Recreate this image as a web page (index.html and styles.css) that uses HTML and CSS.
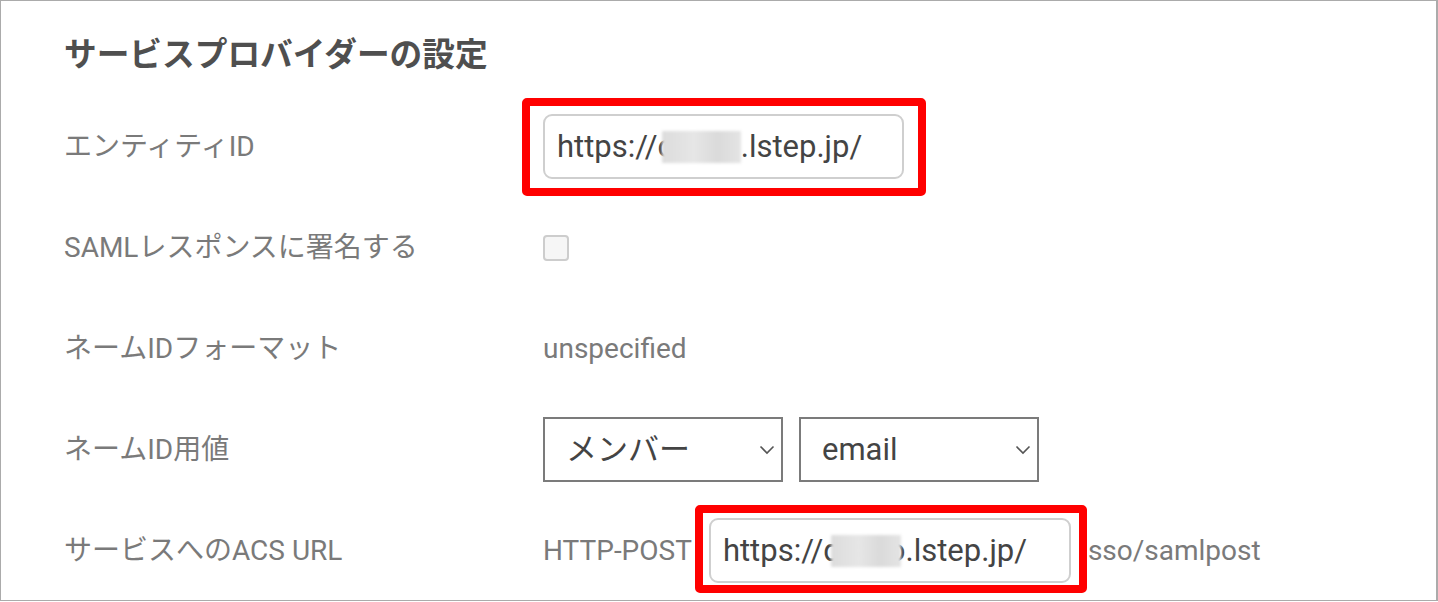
FILE: index.html
```html
<!DOCTYPE html>
<html lang="ja">
<head>
  <meta charset="UTF-8">
  <title>サービスプロバイダーの設定</title>
  <link rel="stylesheet" href="styles.css">
</head>
<body>
  <div class="panel">
    <h2>サービスプロバイダーの設定</h2>

    <div class="row">
      <div class="label">エンティティID</div>
      <div class="value">
        <span class="mark mark-entity">
          <span class="url-field">https://c<span class="masked m1"></span>.lstep.jp/</span>
        </span>
      </div>
    </div>

    <div class="row">
      <div class="label">SAMLレスポンスに署名する</div>
      <div class="value">
        <input type="checkbox" class="check">
      </div>
    </div>

    <div class="row">
      <div class="label">ネームIDフォーマット</div>
      <div class="value text">unspecified</div>
    </div>

    <div class="row">
      <div class="label">ネームID用値</div>
      <div class="value selects">
        <div class="select-wrap">
          <select><option>メンバー</option></select>
          <svg class="chev" width="16" height="10" viewBox="0 0 16 10"><path d="M1.5 1.5 L8 8 L14.5 1.5" fill="none" stroke="#555" stroke-width="1.6"/></svg>
        </div>
        <div class="select-wrap">
          <select><option>email</option></select>
          <svg class="chev" width="16" height="10" viewBox="0 0 16 10"><path d="M1.5 1.5 L8 8 L14.5 1.5" fill="none" stroke="#555" stroke-width="1.6"/></svg>
        </div>
      </div>
    </div>

    <div class="row">
      <div class="label">サービスへのACS URL</div>
      <div class="value text acs">
        <span>HTTP-POST</span>
        <span class="mark mark-acs">
          <span class="url-field">https://d<span class="masked m2"></span>o.lstep.jp/</span>
        </span>
        <span>sso/samlpost</span>
      </div>
    </div>
  </div>
</body>
</html>
```

FILE: styles.css
```css
body {
  margin: 0;
  background: #fff;
  font-family: Roboto, "Noto Sans CJK JP", sans-serif;
}
.panel {
  width: 1438px; height: 601px;
  box-sizing: border-box;
  border: 1px solid #ababab;
  border-right-width: 2px;
  padding-left: 63px;
  overflow: hidden;
}
h2 {
  margin: 30px 0 16px;
  font-size: 32.7px; line-height: 49px;
  font-weight: bold; color: #4f4f4f;
}
.row {
  display: flex; align-items: center;
  height: 101px;
}
.label {
  width: 479px; flex: none;
  padding-bottom: 6px;
  font-size: 28px; color: #7a7a7a;
}
.value { display: flex; align-items: center; }
.value.text { font-size: 28px; color: #7a7a7a; }
.acs { gap: 17px; }

/* url fields */
.mark { position: relative; display: inline-block; }
.mark::after {
  content: ""; position: absolute;
  border: 8px solid #ff0000; border-radius: 5px;
}
.mark-entity::after { left: -21px; right: -22px; top: -16px; bottom: -17px; }
.mark-acs::after { left: -14px; right: -16px; top: -13px; bottom: -10px; }
.url-field {
  display: flex; align-items: center;
  box-sizing: border-box;
  width: 361px; height: 65px;
  padding-left: 12px;
  border: 2px solid #cfcfcf; border-radius: 9px;
  font-size: 31px; color: #444;
  white-space: nowrap;
}
.mark-acs .url-field { width: 362px; }
.masked {
  position: relative; z-index: 1;
  display: inline-block; height: 32px;
  background: linear-gradient(90deg, #dcdcdc, #e6e6e6 40%, #dadada 70%, #e4e4e4);
  filter: blur(1.5px);
}
.m1 { width: 79px; margin-left: -12px; }
.m2 { width: 70px; margin-left: -10px; margin-right: -13px; }

/* checkbox */
.check {
  appearance: none; margin: 0;
  width: 26px; height: 26px;
  border: 2px solid #cdcdcd; border-radius: 4px;
  background: #f6f6f6;
}

/* selects */
.selects { gap: 16px; }
.select-wrap { position: relative; }
.select-wrap select {
  appearance: none;
  width: 240px; height: 65px;
  box-sizing: border-box;
  padding: 0 0 0 21px;
  border: 2px solid #7b7b7b; border-radius: 0;
  background: #fff;
  font-family: Roboto, "Noto Sans CJK JP", sans-serif;
  font-size: 31px; color: #444;
}
.chev {
  position: absolute; right: 8px; top: 28px;
  pointer-events: none;
}
```
